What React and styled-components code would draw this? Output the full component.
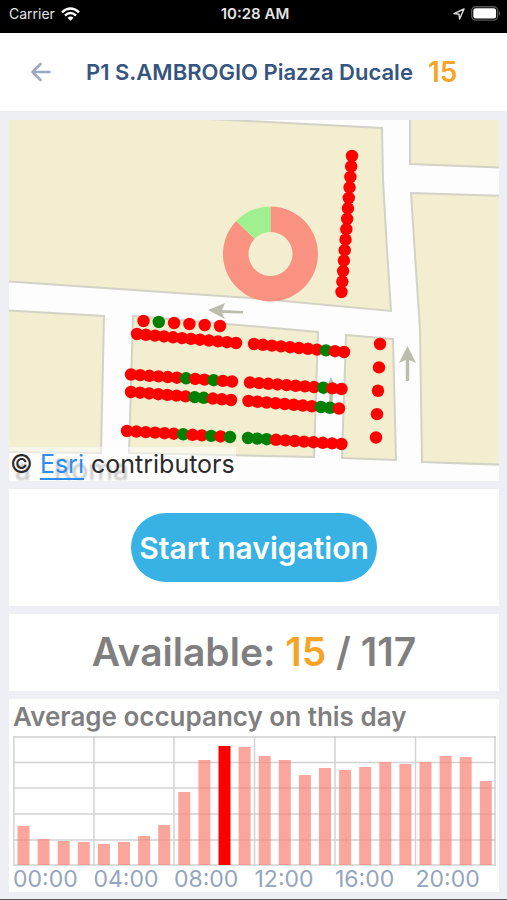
import React from "react";
import styled, { createGlobalStyle } from "styled-components";

const GlobalStyle = createGlobalStyle`
  *, *::before, *::after { box-sizing: border-box; }
  body {
    margin: 0;
    background: #eeeff5;
    font-family: Inter, "Liberation Sans", sans-serif;
  }
`;

const Screen = styled.div`
  display: flex;
  flex-direction: column;
  min-height: 100vh;
  border-bottom: 1px solid #55565c;
`;

const StatusBar = styled.div`
  display: grid;
  grid-template-columns: 1fr auto 1fr;
  align-items: center;
  height: 33px;
  padding: 0 6px 6px 9px;
  background: #000;
  color: #e4e4e4;
  font-size: 14px;
  line-height: 20px;
`;

const StatusGroup = styled.div`
  display: flex;
  align-items: center;
  gap: 6px;
  justify-content: ${(p) => (p.$end ? "flex-end" : "flex-start")};
`;

const Clock = styled.time`
  font-size: 15px;
  font-weight: 600;
`;

const Header = styled.header`
  display: flex;
  align-items: center;
  height: 78px;
  padding: 0 28px;
  background: #fff;
`;

const BackButton = styled.button`
  display: flex;
  margin-right: 33px;
  padding: 0;
  border: 0;
  background: none;
  cursor: pointer;
`;

const Title = styled.h1`
  margin: 0 15px 0 0;
  color: #35557f;
  font-size: 22px;
  font-weight: 600;
  line-height: 28px;
  white-space: nowrap;
`;

const Count = styled.span`
  color: #f5a428;
  font-size: ${(p) => (p.$large ? "39px" : "28px")};
  font-weight: 600;
`;

const Content = styled.main`
  display: flex;
  flex-direction: column;
  gap: 8px;
  padding: 9px 8px 7px 9px;
`;

const MapCard = styled.section`
  position: relative;
  overflow: hidden;
  background: #fdfdfd;
`;

const MapDrawing = styled.svg`
  display: block;
  width: 100%;
  height: auto;
`;

const StreetName = styled.text`
  fill: #808080;
  font-size: 28px;
  filter: blur(1px);
`;

const Attribution = styled.div`
  position: absolute;
  left: 0;
  bottom: 0;
  padding: 0 1px;
  background: rgba(255, 255, 255, 0.5);
  color: #2b2b2b;
  font-size: 25px;
  line-height: 34px;
  white-space: nowrap;
`;

const AttributionLink = styled.a`
  color: #2d8cf0;
  text-decoration: underline;
  text-decoration-thickness: 2px;
  text-underline-offset: 5px;
`;

const Card = styled.section`
  display: flex;
  align-items: center;
  justify-content: center;
  padding: ${(p) => p.$pad};
  background: #fff;
`;

const NavButton = styled.button`
  height: 69px;
  padding: 0 8px;
  border: 0;
  border-radius: 35px;
  background: #38b1e5;
  color: #fff;
  font: 600 30px/36px Inter, "Liberation Sans", sans-serif;
  white-space: nowrap;
  cursor: pointer;
`;

const Availability = styled.p`
  margin: 0;
  color: #7f7f7f;
  font-size: 39px;
  font-weight: 600;
  line-height: 48px;
  white-space: nowrap;
`;

const ChartCard = styled.section`
  padding: 3px 3px 0 4px;
  background: #fff;
`;

const ChartTitle = styled.h2`
  margin: 0 0 4px;
  color: #7f7f7f;
  font-size: 26px;
  font-weight: 600;
  line-height: 30px;
  white-space: nowrap;
`;

const Plot = styled.svg`
  display: block;
  width: 100%;
  height: 130px;
`;

const HourAxis = styled.div`
  display: grid;
  grid-template-columns: repeat(6, 1fr);
  color: #93a6bd;
  font-size: 23px;
  line-height: 26px;
`;

const RED = "#ff0000";
const GREEN = "#008000";

const spotLines = [
  { from: [352, 156], to: [341.5, 292], count: 14, free: [] },
  { from: [143.5, 321], to: [220, 326], count: 6, free: [1] },
  { from: [137, 334], to: [236, 343], count: 12, free: [] },
  { from: [254, 344], to: [344, 352], count: 11, free: [8] },
  { from: [131, 374.5], to: [232, 381.5], count: 12, free: [6, 9] },
  { from: [250, 382.5], to: [341.5, 389], count: 11, free: [8] },
  { from: [131, 392], to: [231, 400], count: 12, free: [7, 8] },
  { from: [248.5, 401], to: [339, 408.5], count: 11, free: [8, 9] },
  { from: [127, 431], to: [230, 437], count: 12, free: [6, 9, 11] },
  { from: [248, 438], to: [341.5, 444], count: 11, free: [0, 1, 2] },
  { from: [380, 344], to: [376, 437.5], count: 5, free: [] },
];

const spots = spotLines.flatMap(({ from, to, count, free }) =>
  Array.from({ length: count }, (_, i) => {
    const t = i / (count - 1);
    return {
      x: from[0] + (to[0] - from[0]) * t,
      y: from[1] + (to[1] - from[1]) * t,
      free: free.includes(i),
    };
  })
);

const blocks = [
  "0,110 90,113 210,119 382,128 383,180 387,250 391,311 250,298 0,281",
  "410,110 410,164 510,168 510,110",
  "411,193 510,196 510,465 422,462 420,330 416,270",
  "0,310 104,316 101,453 0,452",
  "133,316 250,326 318,332 314,457 129,453",
  "346,335 393,339 396,460 342,458",
];

function ParkingMap() {
  return (
    <MapDrawing viewBox="9 120 490 361" role="img" aria-label="Parking map">
      <g fill="#f2eecf" stroke="#d3d2c6" strokeWidth="2">
        {blocks.map((points) => (
          <polygon key={points} points={points} />
        ))}
      </g>
      <g fill="#bcbdab">
        <path d="M208 310 L225 303 L222 310 L243 311 V313.500 L222 313 L225 319 Z" />
        <path d="M407.500 346 L416 363 L409.200 360 V381 H405.800 V360 L399 363 Z" />
        <path d="M331 377 L339 395 L332.700 392 V412 H329.300 V392 L323 395 Z" />
      </g>
      <StreetName y="480">
        <tspan x="15">a</tspan>
        <tspan x="54" textAnchor="start">Roma</tspan>
      </StreetName>
      <path d="M270.500 206.500 A47.500 47.500 0 1 1 236.200 221.100 L254.600 238.800 A22 22 0 1 0 270.500 232 Z" fill="#fa9282" />
      <path d="M270.500 206.500 V232 A22 22 0 0 0 254.600 238.800 L236.200 221.100 A47.500 47.500 0 0 1 270.500 206.500 Z" fill="#a1f08f" />
      {spots.map((s) => (
        <circle key={`${s.x}-${s.y}`} cx={s.x} cy={s.y} r="6.200" fill={s.free ? GREEN : RED} />
      ))}
    </MapDrawing>
  );
}

const occupancy = [
  39, 26, 24, 23, 21, 23, 29, 40, 73, 105, 119, 118, 109, 105, 90, 97, 95, 98, 103, 101, 103, 109,
  108, 84,
];
const CURRENT_HOUR = 10;
const hours = ["00:00", "04:00", "08:00", "12:00", "16:00", "20:00"];

function OccupancyPlot() {
  return (
    <Plot viewBox="0 0 483 130" preserveAspectRatio="none" role="img" aria-label="Occupancy by hour">
      <g stroke="#d2d2d2" strokeWidth="1.500">
        {[1, 26.5, 52, 78, 104, 129].map((y) => (
          <line key={y} x1="0" x2="483" y1={y} y2={y} />
        ))}
        {[1, 81, 161, 241.5, 322, 402.5, 482].map((x) => (
          <line key={x} x1={x} x2={x} y1="0" y2="130" />
        ))}
      </g>
      {occupancy.map((value, hour) => (
        <rect
          key={hour}
          x={4.5 + hour * 20.1}
          y={129 - value}
          width="12"
          height={value}
          fill={hour === CURRENT_HOUR ? "#ff0000" : "rgba(250, 128, 114, 0.7)"}
        />
      ))}
    </Plot>
  );
}

const WifiIcon = () => (
  <svg width="19" height="14" viewBox="0 0 19 14" fill="none" stroke="#fff" strokeWidth="2.400">
    <path d="M1 5.300 Q9.500 -2.300 18 5.300" />
    <path d="M4 8.500 Q9.500 3.500 15 8.500" />
    <path d="M6.500 10.700 Q9.500 8.200 12.500 10.700 L9.500 13.800 Z" fill="#fff" stroke="none" />
  </svg>
);

const LocationIcon = () => (
  <svg width="12" height="12" viewBox="0 0 12 12" fill="none" stroke="#ddd" strokeWidth="1.400" strokeLinejoin="round">
    <path d="M11 1 L1 5.600 L6 6.200 L6.600 11 Z" />
  </svg>
);

const BatteryIcon = () => (
  <svg width="30" height="15" viewBox="0 0 30 15">
    <rect x="0.700" y="0.700" width="26" height="13.400" rx="4" fill="none" stroke="#555" strokeWidth="1.400" />
    <rect x="2.300" y="2.300" width="22.800" height="10.200" rx="2.500" fill="#fff" />
    <path d="M28 5 Q30 7.500 28 10 Z" fill="#666" />
  </svg>
);

const BackIcon = () => (
  <svg width="25" height="24" viewBox="0 0 25 24" fill="none" stroke="#9aabc4" strokeWidth="2.600" strokeLinecap="round" strokeLinejoin="round">
    <path d="M21.500 12 H4.500 M12.500 4 L4.500 12 L12.500 20" />
  </svg>
);

export default function App() {
  return (
    <Screen>
      <GlobalStyle />
      <StatusBar>
        <StatusGroup>
          Carrier <WifiIcon />
        </StatusGroup>
        <Clock>10:28 AM</Clock>
        <StatusGroup $end>
          <LocationIcon />
          <BatteryIcon />
        </StatusGroup>
      </StatusBar>
      <Header>
        <BackButton type="button" aria-label="Back">
          <BackIcon />
        </BackButton>
        <Title>P1 S.AMBROGIO Piazza Ducale</Title>
        <Count>15</Count>
      </Header>
      <Content>
        <MapCard>
          <ParkingMap />
          <Attribution>
            © <AttributionLink href="#esri">Esri</AttributionLink> contributors
          </Attribution>
        </MapCard>
        <Card $pad="24px 0">
          <NavButton type="button">Start navigation</NavButton>
        </Card>
        <Card $pad="14px 0 15px">
          <Availability>
            Available: <Count $large>15</Count> / 117
          </Availability>
        </Card>
        <ChartCard>
          <ChartTitle>Average occupancy on this day</ChartTitle>
          <OccupancyPlot />
          <HourAxis>
            {hours.map((h) => (
              <span key={h}>{h}</span>
            ))}
          </HourAxis>
        </ChartCard>
      </Content>
    </Screen>
  );
}
